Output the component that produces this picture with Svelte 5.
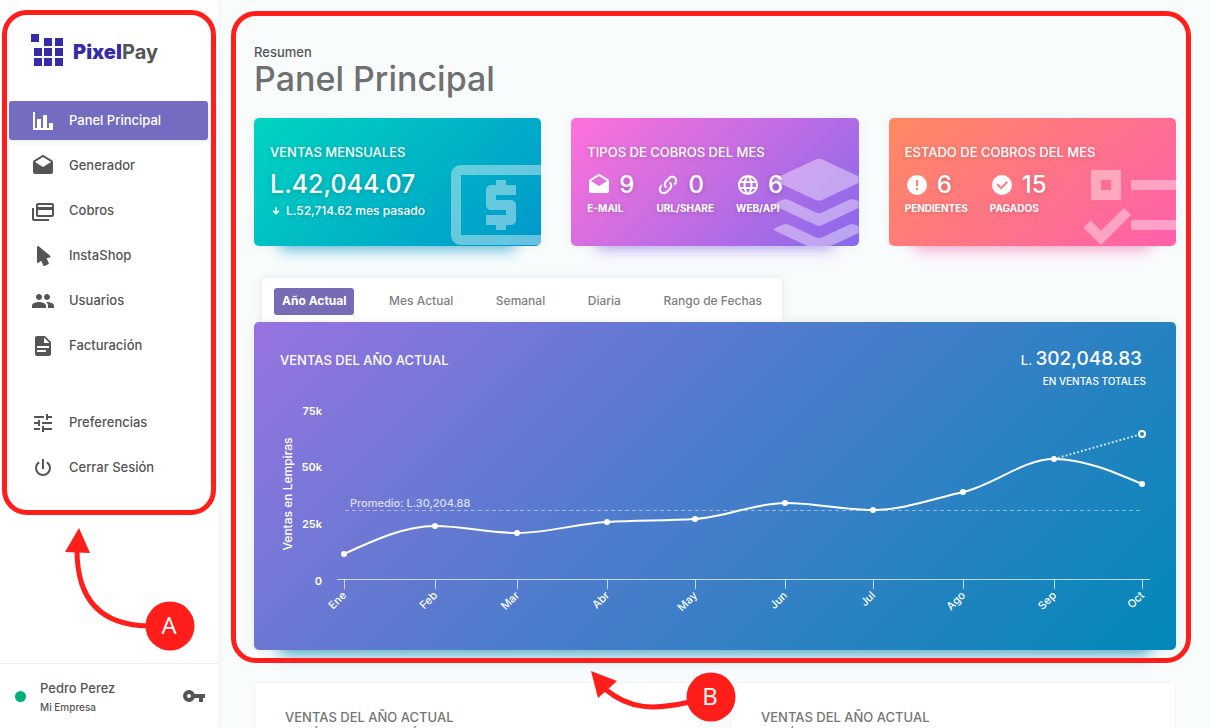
<script>
  const icons = {
    chart: 'M22,21H2V3H4V19H6V10H10V19H12V6H16V19H18V14H22V21Z',
    mail: 'M4,8L12,13L20,8V8L12,3L4,8V8M22,8V18A2,2 0 0,1 20,20H4A2,2 0 0,1 2,18V8C2,7.27 2.39,6.64 2.97,6.29L12,0.64L21.03,6.29C21.61,6.64 22,7.27 22,8Z',
    cards: 'M21,8V6H7V8H21M21,16V11H7V16H21M21,4A2,2 0 0,1 23,6V16A2,2 0 0,1 21,18H7C5.89,18 5,17.1 5,16V6C5,4.89 5.89,4 7,4H21M3,20H18V22H3A2,2 0 0,1 1,20V9H3V20Z',
    cursor: 'M13.64,21.97C13.14,22.21 12.54,22 12.31,21.5L10.13,16.76L7.62,18.78C7.45,18.92 7.24,19 7,19A1,1 0 0,1 6,18V3A1,1 0 0,1 7,2C7.24,2 7.47,2.09 7.64,2.23L7.65,2.22L19.14,11.86C19.57,12.22 19.62,12.85 19.27,13.27C19.12,13.45 18.91,13.57 18.7,13.61L15.54,14.23L17.74,18.96C18,19.46 17.76,20.05 17.26,20.28L13.64,21.97Z',
    users: 'M16 11c1.66 0 2.99-1.34 2.99-3S17.66 5 16 5c-1.66 0-3 1.34-3 3s1.34 3 3 3zm-8 0c1.66 0 2.99-1.34 2.99-3S9.66 5 8 5C6.34 5 5 6.34 5 8s1.34 3 3 3zm0 2c-2.33 0-7 1.17-7 3.5V19h14v-2.5c0-2.33-4.67-3.5-7-3.5zm8 0c-.29 0-.62.02-.97.05 1.16.84 1.97 1.97 1.97 3.45V19h6v-2.5c0-2.33-4.67-3.5-7-3.5z',
    file: 'M13,9H18.5L13,3.5V9M6,2H14L20,8V20A2,2 0 0,1 18,22H6C4.89,22 4,21.1 4,20V4C4,2.89 4.89,2 6,2M15,18V16H6V18H15M18,14V12H6V14H18Z',
    tune: 'M3 17v2h6v-2H3zM3 5v2h10V5H3zm10 16v-2h8v-2h-8v-2h-2v6h2zM7 9v2H3v2h4v2h2V9H7zm14 4v-2H11v2h10zm-6-4h2V7h4V5h-4V3h-2v6z',
    power: 'M16.56,5.44L15.11,6.89C16.84,7.94 18,9.83 18,12A6,6 0 0,1 12,18A6,6 0 0,1 6,12C6,9.83 7.16,7.94 8.88,6.88L7.44,5.44C5.36,6.88 4,9.28 4,12A8,8 0 0,0 12,20A8,8 0 0,0 20,12C20,9.28 18.64,6.88 16.56,5.44M13,3H11V13H13',
    key: 'M7,14A2,2 0 0,1 5,12A2,2 0 0,1 7,10A2,2 0 0,1 9,12A2,2 0 0,1 7,14M12.65,10C11.83,7.67 9.61,6 7,6A6,6 0 0,0 1,12A6,6 0 0,0 7,18C9.61,18 11.83,16.33 12.65,14H17V18H21V14H23V10H12.65Z',
    link: 'M10.59,13.41C11,13.8 11,14.44 10.59,14.83C10.2,15.22 9.56,15.22 9.17,14.83C7.22,12.88 7.22,9.71 9.17,7.76V7.76L12.71,4.22C14.66,2.27 17.83,2.27 19.78,4.22C21.73,6.17 21.73,9.34 19.78,11.29L18.29,12.78C18.3,11.96 18.17,11.14 17.89,10.36L18.36,9.88C19.54,8.71 19.54,6.81 18.36,5.64C17.19,4.46 15.29,4.46 14.12,5.64L10.59,9.17C9.41,10.34 9.41,12.24 10.59,13.41M13.41,9.17C13.8,8.78 14.44,8.78 14.83,9.17C16.78,11.12 16.78,14.29 14.83,16.24V16.24L11.29,19.78C9.34,21.73 6.17,21.73 4.22,19.78C2.27,17.83 2.27,14.66 4.22,12.71L5.71,11.22C5.7,12.04 5.83,12.86 6.11,13.65L5.64,14.12C4.46,15.29 4.46,17.19 5.64,18.36C6.81,19.54 8.71,19.54 9.88,18.36L13.41,14.83C14.59,13.66 14.59,11.76 13.41,10.59C13,10.2 13,9.56 13.41,9.17Z',
    web: 'M16.36,14C16.44,13.34 16.5,12.68 16.5,12C16.5,11.32 16.44,10.66 16.36,10H19.74C19.9,10.64 20,11.31 20,12C20,12.69 19.9,13.36 19.74,14M14.59,19.56C15.19,18.45 15.65,17.25 15.97,16H18.92C17.96,17.65 16.43,18.93 14.59,19.56M14.34,14H9.66C9.56,13.34 9.5,12.68 9.5,12C9.5,11.32 9.56,10.65 9.66,10H14.34C14.43,10.65 14.5,11.32 14.5,12C14.5,12.68 14.43,13.34 14.34,14M12,19.96C11.17,18.76 10.5,17.43 10.09,16H13.91C13.5,17.43 12.83,18.76 12,19.96M8,8H5.08C6.03,6.34 7.57,5.06 9.4,4.44C8.8,5.55 8.35,6.75 8,8M5.08,16H8C8.35,17.25 8.8,18.45 9.4,19.56C7.57,18.93 6.03,17.65 5.08,16M4.26,14C4.1,13.36 4,12.69 4,12C4,11.31 4.1,10.64 4.26,10H7.64C7.56,10.66 7.5,11.32 7.5,12C7.5,12.68 7.56,13.34 7.64,14M12,4.03C12.83,5.23 13.5,6.57 13.91,8H10.09C10.5,6.57 11.17,5.23 12,4.03M18.92,8H15.97C15.65,6.75 15.19,5.55 14.59,4.44C16.43,5.07 17.96,6.34 18.92,8M12,2C6.47,2 2,6.5 2,12A10,10 0 0,0 12,22A10,10 0 0,0 22,12A10,10 0 0,0 12,2Z',
    alert: 'M13,13H11V7H13M13,17H11V15H13M12,2A10,10 0 0,0 2,12A10,10 0 0,0 12,22A10,10 0 0,0 22,12A10,10 0 0,0 12,2Z',
    check: 'M12,2A10,10 0 0,1 22,12A10,10 0 0,1 12,22A10,10 0 0,1 2,12A10,10 0 0,1 12,2M11,16.5L18,9.5L16.59,8.09L11,13.67L7.91,10.59L6.5,12L11,16.5Z',
    down: 'M10.5,4H13.5V14L17,10.5L19,12.6L12,19.6L5,12.6L7,10.5L10.5,14Z',
    cash: 'M11 17h2v-1h1c.55 0 1-.45 1-1v-3c0-.55-.45-1-1-1h-3v-1h4V8h-2V7h-2v1h-1c-.55 0-1 .45-1 1v3c0 .55.45 1 1 1h3v1H9v2h2v1zm9-13H4c-1.11 0-1.99.89-1.99 2L2 18c0 1.11.89 2 2 2h16c1.11 0 2-.89 2-2V6c0-1.11-.89-2-2-2zm0 14H4V6h16v12z',
    layers: 'M12.6,2.86C15.27,4.1 18,5.39 20.66,6.63C20.81,6.7 21,6.75 21,6.95C21,7.15 20.81,7.19 20.66,7.26C18,8.5 15.3,9.77 12.62,11C12.21,11.21 11.79,11.21 11.38,11C8.69,9.76 6,8.5 3.32,7.25C3.18,7.19 3,7.14 3,6.94C3,6.76 3.18,6.71 3.31,6.65C6,5.39 8.74,4.1 11.44,2.85C11.73,2.72 12.3,2.73 12.6,2.86M12,21.15C11.8,21.15 11.66,21.11 11.38,21C8.69,19.74 6,18.47 3.33,17.22C3.19,17.15 3,17.11 3,16.9C3,16.7 3.19,16.66 3.34,16.59C3.78,16.38 4.23,16.17 4.67,15.96C5.12,15.76 5.56,15.76 6,15.97C7.79,16.8 9.57,17.63 11.35,18.46C11.79,18.67 12.23,18.66 12.67,18.46C14.45,17.62 16.23,16.79 18,15.96C18.44,15.76 18.87,15.75 19.29,15.95C19.77,16.16 20.24,16.39 20.71,16.61C20.78,16.64 20.85,16.68 20.91,16.73C21.04,16.83 21.04,17 20.91,17.08C20.83,17.14 20.74,17.19 20.65,17.23C18,18.5 15.33,19.72 12.66,20.95C12.46,21.05 12.19,21.15 12,21.15M12,16.17C11.9,16.17 11.55,16.07 11.36,16C8.68,14.74 6,13.5 3.34,12.24C3.2,12.18 3,12.13 3,11.93C3,11.72 3.2,11.68 3.35,11.61C3.8,11.39 4.25,11.18 4.7,10.97C5.13,10.78 5.56,10.78 6,11C7.78,11.82 9.58,12.66 11.38,13.5C11.79,13.69 12.21,13.69 12.63,13.5C14.43,12.65 16.23,11.81 18.04,10.97C18.45,10.78 18.87,10.78 19.29,10.97C19.76,11.19 20.24,11.41 20.71,11.63C20.77,11.66 20.84,11.69 20.9,11.74C21.04,11.85 21.04,12 20.89,12.12C20.84,12.16 20.77,12.19 20.71,12.22C18,13.5 15.31,14.75 12.61,16C12.42,16.09 12.08,16.17 12,16.17Z',
    list: 'M3,5H9V11H3V5M5,7V9H7V7H5M11,7H21V9H11V7M11,15H21V17H11V15M5,20L1.5,16.5L2.91,15.09L5,17.17L9.59,12.59L11,14L5,20Z'
  };

  const menu = [
    ['chart', 'Panel Principal'],
    ['mail', 'Generador'],
    ['cards', 'Cobros'],
    ['cursor', 'InstaShop'],
    ['users', 'Usuarios'],
    ['file', 'Facturación']
  ];
  const account = [
    ['tune', 'Preferencias'],
    ['power', 'Cerrar Sesión']
  ];

  const payments = [
    ['mail', '9', 'E-MAIL'],
    ['link', '0', 'URL/SHARE'],
    ['web', '6', 'WEB/API']
  ];
  const states = [
    ['alert', '6', 'PENDIENTES'],
    ['check', '15', 'PAGADOS']
  ];

  const tabs = ['Año Actual', 'Mes Actual', 'Semanal', 'Diaria', 'Rango de Fechas'];
  let active = $state(0);

  const months = ['Ene', 'Feb', 'Mar', 'Abr', 'May', 'Jun', 'Jul', 'Ago', 'Sep', 'Oct'];
  const points = [
    [90, 162], [181, 134], [263, 141], [353, 130], [441, 127],
    [531, 111], [619, 118], [709, 100], [800, 67], [888, 92]
  ];
  const scale = [['75k', 23], ['50k', 79], ['25k', 136], ['0', 193]];

  // Monotone cubic curve through the monthly points.
  function curve(p) {
    const n = p.length;
    const slope = (i) => (p[i + 1][1] - p[i][1]) / (p[i + 1][0] - p[i][0]);
    const t = p.map((_, i) => {
      if (i === 0 || i === n - 1) return null;
      const a = slope(i - 1);
      const b = slope(i);
      if (a * b <= 0) return 0;
      return Math.sign(a) * Math.min(Math.abs(a), Math.abs(b), Math.abs(a + b) / 4) * 1.6;
    });
    t[0] = (3 * slope(0) - t[1]) / 2;
    t[n - 1] = (3 * slope(n - 2) - t[n - 2]) / 2;
    let d = `M${p[0][0]},${p[0][1]}`;
    for (let i = 0; i < n - 1; i++) {
      const h = (p[i + 1][0] - p[i][0]) / 3;
      d += `C${p[i][0] + h},${p[i][1] + h * t[i]} ${p[i + 1][0] - h},${p[i + 1][1] - h * t[i + 1]} ${p[i + 1][0]},${p[i + 1][1]}`;
    }
    return d;
  }
  const line = curve(points);
</script>

{#snippet icon(name, cls)}
  <svg class={cls} viewBox="0 0 24 24" aria-hidden="true"><path d={icons[name]} /></svg>
{/snippet}

{#snippet stats(items)}
  <div class="stats">
    {#each items as [name, value, label]}
      <div class="stat">
        <div class="stat-value">{@render icon(name, 'icon')}<strong>{value}</strong></div>
        <span>{label}</span>
      </div>
    {/each}
  </div>
{/snippet}

<div class="app">
  <aside>
    <a class="logo" href="#inicio">
      <svg viewBox="0 0 32 32" aria-hidden="true">
        <path d="M0,0h8v8h-8zM13,4h8v8h-8zM24,4h8v8h-8zM3,14h8v8h-8zM13,14h8v8h-8zM24,14h8v8h-8zM3,24h8v8h-8zM13,24h8v8h-8zM24,24h8v8h-8z" />
      </svg>
      <span><b>Pixel</b>Pay</span>
    </a>
    <nav>
      {#each menu as [name, label], i}
        <a href="#{name}" class:current={i === 0}>{@render icon(name, 'icon')}<span>{label}</span></a>
      {/each}
    </nav>
    <nav class="secondary">
      {#each account as [name, label]}
        <a href="#{name}">{@render icon(name, 'icon')}<span>{label}</span></a>
      {/each}
    </nav>
    <div class="frame frame-a"></div>
    <svg class="callout callout-a" viewBox="0 0 132 124">
      <path class="arrow" d="M84,98 C37,97 13,72 13,22" />
      <path class="tip" d="M15,0 L1,24 L26,25Z" />
      <circle cx="106" cy="98" r="24.5" />
      <text x="105" y="106">A</text>
    </svg>
    <footer>
      <i class="dot"></i>
      <div class="who"><span>Pedro Perez</span><small>Mi Empresa</small></div>
      <button type="button" aria-label="Cambiar clave">{@render icon('key', 'icon')}</button>
    </footer>
  </aside>

  <main>
    <section class="overview">
      <header>
        <p>Resumen</p>
        <h1>Panel Principal</h1>
      </header>

      <div class="cards">
        <article class="card teal">
          {@render icon('cash', 'backdrop')}
          <h2>VENTAS MENSUALES</h2>
          <div class="amount">L.42,044.07</div>
          <div class="previous">{@render icon('down', 'mini')}L.52,714.62 mes pasado</div>
        </article>
        <article class="card violet">
          {@render icon('layers', 'backdrop')}
          <h2>TIPOS DE COBROS DEL MES</h2>
          {@render stats(payments)}
        </article>
        <article class="card coral">
          {@render icon('list', 'backdrop')}
          <h2>ESTADO DE COBROS DEL MES</h2>
          {@render stats(states)}
        </article>
      </div>

      <div class="tabs">
        {#each tabs as tab, i}
          <button type="button" class:active={active === i} onclick={() => (active = i)}>{tab}</button>
        {/each}
      </div>

      <article class="sales">
        <div class="sales-head">
          <h2>VENTAS DEL AÑO ACTUAL</h2>
          <div class="total">
            <div class="sum">L. <strong>302,048.83</strong></div>
            <span>EN VENTAS TOTALES</span>
          </div>
        </div>
        <svg class="chart" viewBox="0 0 922 236">
          {#each scale as [label, y]}
            <text class="tick" x="68" {y}>{label}</text>
          {/each}
          <text class="axis-title" transform="translate(38 102) rotate(-90)">Ventas en Lempiras</text>
          <text class="mean" x="96" y="115">Promedio: L.30,204.88</text>
          <path class="mean-line" d="M91,118.5H887" />
          <path class="axis" d="M83,187.5H896" />
          {#each months as month, i}
            <path class="axis" d="M{points[i][0]}.5,187v10" />
            <text class="month" transform="translate({points[i][0] + 3} 204) rotate(-45)">{month}</text>
          {/each}
          <path class="projection" d="M800,67L884,43" />
          <path class="line" d={line} />
          {#each points as [x, y]}
            <circle cx={x} cy={y} r="3" />
          {/each}
          <circle class="ring" cx="888" cy="42" r="3" />
        </svg>
      </article>
      <div class="frame frame-b"></div>
    </section>

    <div class="more">
      <article><h2>VENTAS DEL AÑO ACTUAL<br />SEGÚN TRANSACCIÓN</h2></article>
      <article><h2>VENTAS DEL AÑO ACTUAL<br />SEGÚN MONTO</h2></article>
      <svg class="callout callout-b" viewBox="0 0 145 51">
        <path class="arrow" d="M14,18 C39,39 63,39 99,31" />
        <path class="tip" d="M0,0 L26,10 L7,27Z" />
        <circle cx="120" cy="26" r="24.5" />
        <text x="119" y="34">B</text>
      </svg>
    </div>
  </main>
</div>

<style>
  :global(body) {
    margin: 0;
  }
  .app {
    display: flex;
    height: 100vh;
    overflow: hidden;
    background: #f9fcfd;
    color: #555;
    font: 500 13px/16px Inter, 'Open Sans', sans-serif;
  }
  h1, h2, p {
    margin: 0;
    font-weight: 500;
  }
  h2 {
    font-size: 13px;
    line-height: 16px;
  }
  button {
    border: 0;
    background: none;
    font: inherit;
    color: inherit;
    cursor: pointer;
  }
  svg {
    display: block;
    flex: none;
  }
  .icon {
    width: 24px;
    height: 24px;
    fill: currentColor;
  }

  aside {
    position: relative;
    display: flex;
    flex: none;
    flex-direction: column;
    width: 218px;
    background: #fff;
    box-shadow: 0 0 8px rgba(0, 0, 0, 0.05);
  }
  .logo {
    display: flex;
    align-items: center;
    gap: 10px;
    margin: 34px 0 35px 31px;
    color: #555;
    font-size: 20px;
    font-weight: 700;
    text-decoration: none;
  }
  .logo svg {
    width: 32px;
    height: 32px;
    fill: #352da8;
  }
  .logo b {
    color: #352da8;
  }
  .logo span {
    padding-top: 4px;
  }
  nav {
    display: flex;
    flex-direction: column;
    gap: 6px;
    padding: 0 10px 0 9px;
  }
  nav.secondary {
    padding-top: 38px;
  }
  nav a {
    display: flex;
    align-items: center;
    gap: 14px;
    height: 39px;
    padding-left: 22px;
    border-radius: 3px;
    color: #555;
    text-decoration: none;
  }
  nav span {
    padding-bottom: 2px;
  }
  nav a.current {
    background: #736cc0;
    box-shadow: 0 2px 6px rgba(0, 0, 0, 0.08);
    color: #fff;
  }
  footer {
    display: flex;
    align-items: center;
    gap: 14px;
    height: 64px;
    margin-top: auto;
    padding: 0 12px 0 15px;
    border-top: 1px solid #eee;
  }
  .dot {
    width: 11px;
    height: 11px;
    border-radius: 50%;
    background: #00b176;
  }
  .who {
    display: flex;
    flex: 1;
    flex-direction: column;
    gap: 4px;
    padding-top: 1px;
  }
  .who small {
    font-size: 10px;
    line-height: 14px;
  }
  footer button {
    padding: 0;
  }

  main {
    flex: 1;
    min-width: 0;
    padding: 0 35px 0 36px;
  }
  .overview {
    position: relative;
  }
  header {
    padding: 44px 0 21px;
  }
  header h1 {
    color: #707070;
    font-size: 34px;
    line-height: 37px;
  }
  .cards {
    display: grid;
    grid-template-columns: repeat(3, 1fr);
    gap: 30px;
  }
  .card {
    position: relative;
    box-sizing: border-box;
    height: 128px;
    padding: 26px 16px 0;
    border-radius: 5px;
    color: #fff;
    text-shadow: 0 1px 5px rgba(0, 0, 0, 0.18);
  }
  .teal {
    background: linear-gradient(135deg, #00d4bf, #0098cc);
    box-shadow: 0 0 10px rgba(0, 0, 0, 0.06), 0 30px 14px -26px #0098cc99;
  }
  .violet {
    background: linear-gradient(135deg, #ff71da, #8769eb);
    box-shadow: 0 0 10px rgba(0, 0, 0, 0.06), 0 30px 14px -26px #8769eb88;
  }
  .coral {
    background: linear-gradient(135deg, #ff8961, #ff60ab);
    box-shadow: 0 0 10px rgba(0, 0, 0, 0.06), 0 30px 14px -26px #ff60ab88;
  }
  .card h2, .amount, .previous, .stats {
    position: relative;
  }
  .backdrop {
    position: absolute;
    right: -20px;
    bottom: -19px;
    width: 120px;
    height: 120px;
    fill: rgba(255, 255, 255, 0.4);
    clip-path: inset(0 20px 19px 0 round 0 0 5px 0);
  }
  .amount {
    margin-top: 9px;
    font-size: 25px;
    line-height: 30px;
  }
  .previous {
    display: flex;
    align-items: center;
    gap: 4px;
    margin-top: 4px;
    font-size: 12px;
  }
  .mini {
    width: 12px;
    height: 12px;
    fill: currentColor;
  }
  .stats {
    display: flex;
    gap: 22px;
    margin-top: 10px;
  }
  .stat-value {
    display: flex;
    align-items: center;
    gap: 8px;
  }
  .stat-value strong {
    font-size: 24px;
    font-weight: 500;
    line-height: 30px;
  }
  .stat span {
    display: block;
    font-size: 10px;
    font-weight: 700;
    line-height: 16px;
  }

  .tabs {
    display: flex;
    align-items: flex-start;
    justify-content: space-between;
    box-sizing: border-box;
    max-width: 520px;
    height: 44px;
    margin: 32px 8px 0;
    padding: 10px 12px;
    border-radius: 3px 3px 0 0;
    background: #fff;
    box-shadow: 0 0 10px rgba(0, 0, 0, 0.09);
    color: #808080;
  }
  .tabs button {
    height: 27px;
    padding: 0 8px 2px;
    border-radius: 3px;
    font-size: 12px;
  }
  .tabs button.active {
    background: #776bb5;
    color: #fff;
    font-weight: 700;
  }

  .sales {
    position: relative;
    border-radius: 5px;
    background: linear-gradient(135deg, #9873df, #567bce 40%, #0088b8);
    box-shadow: 0 0 10px rgba(0, 0, 0, 0.08), 0 32px 14px -26px #0088b899;
    color: #fff;
  }
  .sales-head {
    display: flex;
    justify-content: space-between;
    height: 70px;
    padding: 0 30px 0 26px;
  }
  .sales-head h2 {
    padding-top: 30px;
  }
  .total {
    padding-top: 24px;
    text-align: right;
  }
  .sum {
    padding-right: 4px;
    line-height: 26px;
  }
  .sum strong {
    font-size: 19px;
    font-weight: 500;
  }
  .total span {
    display: block;
    font-size: 10px;
    line-height: 16px;
  }
  .chart {
    width: 100%;
    height: auto;
    padding-bottom: 22px;
    fill: #fff;
    font-size: 11px;
  }
  .tick {
    text-anchor: end;
    font-weight: 600;
  }
  .axis-title {
    text-anchor: middle;
    font-size: 12px;
  }
  .mean {
    opacity: 0.75;
  }
  .mean-line {
    stroke: rgba(255, 255, 255, 0.45);
    stroke-dasharray: 4 3;
  }
  .axis {
    stroke: rgba(255, 255, 255, 0.7);
  }
  .month {
    text-anchor: end;
  }
  .projection {
    stroke: rgba(255, 255, 255, 0.75);
    stroke-width: 2;
    stroke-dasharray: 2 2;
  }
  .line {
    fill: none;
    stroke: #fff;
    stroke-width: 2;
  }
  .ring {
    fill: #2080bd;
    stroke: #fff;
    stroke-width: 2;
  }

  .more {
    position: relative;
    display: grid;
    grid-template-columns: 1fr 1fr;
    gap: 30px;
    margin-top: 32px;
  }
  .more article {
    padding: 26px 30px;
    border: 1px solid #f3f4f5;
    border-radius: 4px;
    background: #fff;
    color: #757575;
  }
  .more h2 {
    line-height: 17px;
  }

  .frame {
    position: absolute;
    border: 5px solid #ff1e1a;
    border-radius: 25px;
    pointer-events: none;
  }
  .frame-a {
    top: 10px;
    right: 2px;
    left: 2px;
    height: 495px;
  }
  .frame-b {
    inset: 11px -15px -13px -23px;
  }
  .callout {
    position: absolute;
    overflow: visible;
    fill: #ff1e1a;
    pointer-events: none;
  }
  .callout-a {
    top: 528px;
    left: 64px;
    width: 132px;
  }
  .callout-b {
    top: -11px;
    left: 337px;
    width: 145px;
  }
  .callout .arrow {
    fill: none;
    stroke: #ff1e1a;
    stroke-width: 5;
  }
  .callout text {
    fill: #fff;
    font: 400 24px 'Open Sans', sans-serif;
    text-anchor: middle;
  }
</style>
